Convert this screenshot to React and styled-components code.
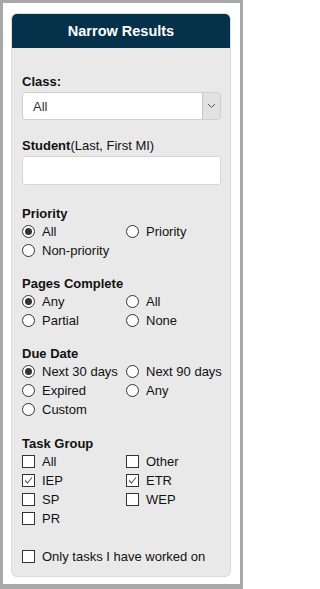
import React, { useState } from 'react'
import styled, { createGlobalStyle } from 'styled-components'

const GlobalStyle = createGlobalStyle`
  html, body {
    margin: 0;
    padding: 0;
    background: #ffffff;
  }
  body {
    font-family: "Liberation Sans", Arial, sans-serif;
    color: #111;
  }
`

const Frame = styled.div`
  box-sizing: border-box;
  width: 243px;
  height: 589px;
  border: 3px solid #a8a8a8;
  border-bottom-width: 5px;
  background: #fff;
  padding: 10px 9px 0 8px;
`

const Panel = styled.div`
  box-sizing: border-box;
  width: 220px;
  height: 564px;
  background: #e9e9e9;
  border: 1px solid #dcdcdc;
  border-radius: 6px;
  overflow: hidden;
`

const Header = styled.div`
  height: 35px;
  margin: -1px -1px 0 -1px;
  background: #05314b;
  color: #fff;
  font-size: 14.5px;
  font-weight: bold;
  display: flex;
  align-items: center;
  justify-content: center;
  border-radius: 6px 6px 0 0;
`

const Body = styled.div`
  padding: 26px 9px 0 10px;
`

const FieldLabel = styled.div`
  font-size: 13px;
  font-weight: bold;
  line-height: 16px;
  margin-top: ${p => p.$top || 0}px;
  margin-bottom: 2px;
  span {
    font-weight: normal;
  }
`

const SelectWrap = styled.div`
  display: flex;
  height: 28px;
  box-sizing: border-box;
  border: 1px solid #cfcfcf;
  border-radius: 3px;
  background: #fff;
  overflow: hidden;
`

const Select = styled.select`
  flex: 1;
  appearance: none;
  border: none;
  outline: none;
  background: transparent;
  font-family: inherit;
  font-size: 13px;
  color: #333;
  padding: 0 0 0 10px;
`

const ArrowBox = styled.div`
  width: 17px;
  background: #e2e2e2;
  border-left: 1px solid #c4c4c4;
  display: flex;
  align-items: center;
  justify-content: center;
`

const TextInput = styled.input`
  display: block;
  box-sizing: border-box;
  width: 199px;
  height: 29px;
  border: 1px solid #d6d6d6;
  border-radius: 3px;
  background: #fff;
  outline: none;
`

const Group = styled.div`
  margin-top: ${p => p.$top}px;
`

const GroupTitle = styled.div`
  font-size: 13px;
  font-weight: bold;
  line-height: 17px;
`

const Options = styled.div`
  display: grid;
  grid-template-columns: 104px 1fr;
  grid-auto-rows: 19px;
`

const Option = styled.label`
  display: flex;
  align-items: center;
  gap: 7px;
  font-size: 13px;
  color: #111;
  white-space: nowrap;
`

const Radio = styled.span`
  box-sizing: border-box;
  width: 13px;
  height: 13px;
  border: 1px solid #333;
  border-radius: 50%;
  background: #fff;
  display: flex;
  align-items: center;
  justify-content: center;
  flex-shrink: 0;
  &::after {
    content: '';
    width: 7px;
    height: 7px;
    border-radius: 50%;
    background: ${p => (p.$on ? '#333' : 'transparent')};
  }
`

const Box = styled.span`
  box-sizing: border-box;
  width: 13px;
  height: 13px;
  border: 1px solid #333;
  background: #fff;
  display: flex;
  align-items: center;
  justify-content: center;
  flex-shrink: 0;
`

const Check = () => (
  <svg width="9" height="9" viewBox="0 0 9 9">
    <polyline points="1,4.5 3.5,7 8,1.5" fill="none" stroke="#555" strokeWidth="1.1" />
  </svg>
)

const Chevron = () => (
  <svg width="9" height="6" viewBox="0 0 9 6">
    <polyline points="1,1 4.5,4.5 8,1" fill="none" stroke="#555" strokeWidth="1" />
  </svg>
)

function RadioGroup({ title, items, top }) {
  const [value, setValue] = useState(items[0])
  return (
    <Group $top={top}>
      <GroupTitle>{title}</GroupTitle>
      <Options>
        {items.map(item => (
          <Option key={item} onClick={() => setValue(item)}>
            <Radio $on={value === item} />
            {item}
          </Option>
        ))}
      </Options>
    </Group>
  )
}

function CheckOption({ label, initial }) {
  const [on, setOn] = useState(initial)
  return (
    <Option onClick={() => setOn(!on)}>
      <Box>{on && <Check />}</Box>
      {label}
    </Option>
  )
}

export default function App() {
  const taskGroups = [
    ['All', false],
    ['Other', false],
    ['IEP', true],
    ['ETR', true],
    ['SP', false],
    ['WEP', false],
    ['PR', false],
  ]
  return (
    <>
      <GlobalStyle />
      <Frame>
        <Panel>
          <Header>Narrow Results</Header>
          <Body>
            <FieldLabel>Class:</FieldLabel>
            <SelectWrap>
              <Select defaultValue="All">
                <option>All</option>
              </Select>
              <ArrowBox>
                <Chevron />
              </ArrowBox>
            </SelectWrap>

            <FieldLabel $top={18}>
              Student<span>(Last, First MI)</span>
            </FieldLabel>
            <TextInput type="text" />

            <RadioGroup top={20} title="Priority" items={['All', 'Priority', 'Non-priority']} />
            <RadioGroup top={15} title="Pages Complete" items={['Any', 'All', 'Partial', 'None']} />
            <RadioGroup
              top={15}
              title="Due Date"
              items={['Next 30 days', 'Next 90 days', 'Expired', 'Any', 'Custom']}
            />

            <Group $top={16}>
              <GroupTitle>Task Group</GroupTitle>
              <Options>
                {taskGroups.map(([label, on]) => (
                  <CheckOption key={label} label={label} initial={on} />
                ))}
              </Options>
            </Group>

            <Group $top={19}>
              <Options>
                <CheckOption label="Only tasks I have worked on" initial={false} />
              </Options>
            </Group>
          </Body>
        </Panel>
      </Frame>
    </>
  )
}
